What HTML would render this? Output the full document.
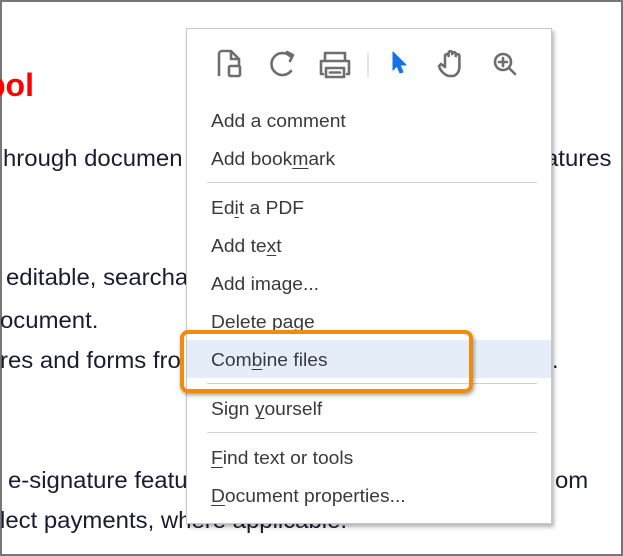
<!DOCTYPE html>
<html><head><meta charset="utf-8"><style>
body{margin:0;width:623px;height:556px;overflow:hidden;background:#fff;position:relative;font-family:"Liberation Sans",sans-serif}
.frame{position:absolute;left:0;top:0;width:619px;height:552px;border:2px solid #777}
.bg{position:absolute;font-size:23px;color:#1b1b33;white-space:nowrap;transform-origin:0 0;transform:scaleX(1.04);line-height:1}
.menu{position:absolute;left:186px;top:28px;width:364px;height:494px;background:#fff;border:1px solid #c8c8c8;box-shadow:2px 3px 4px rgba(0,0,0,.3)}
.it{position:absolute;left:24px;font-size:18.5px;color:#3a3a3a;line-height:1;transform-origin:0 0;transform:scaleX(1.04);white-space:nowrap}
.sep{position:absolute;left:20px;width:330px;height:1px;background:#d0d0d0}
.hl{position:absolute;left:0;top:311px;width:364px;height:38px;background:#e5eef8}
.orange{position:absolute;left:180px;top:330px;width:285px;height:55px;border:4px solid #f28b0c;border-radius:8px;box-shadow:1px 2px 4px rgba(0,0,0,.4)}
u{text-decoration-thickness:1px;text-underline-offset:3px}
</style></head><body>
<div class="frame"></div>
<div class="bg" style="left:-14px;top:69px;color:#f00;font-weight:bold;font-size:32px;transform:none">bol</div>
<div class="bg" style="left:3px;top:147px">hrough documen</div>
<div class="bg" style="left:545px;top:147px">atures</div>
<div class="bg" style="left:6px;top:266px">editable, searcha</div>
<div class="bg" style="left:0;top:309px">ocument.</div>
<div class="bg" style="left:0;top:349px">res and forms fro</div>
<div class="bg" style="left:552px;top:349px">.</div>
<div class="bg" style="left:8px;top:469px">e-signature featu</div>
<div class="bg" style="left:555px;top:469px">om</div>
<div class="bg" style="left:0;top:509px">lect payments, where applicable.</div>
<div class="menu">
<svg style="position:absolute;left:0;top:0" width="364" height="70" fill="none" stroke="#6e6e6e" stroke-width="2.6" stroke-linejoin="round" stroke-linecap="round">
<path d="M32 46V25a3 3 0 0 1 3-3h9l8 8v6M44 22v8h8"/><rect x="42" y="37" width="11" height="10" rx="1.5"/>
<path d="M103 27a11 11 0 1 0 1 15M100 23l6 3-3 6"/>
<path d="M138 32v-8h20v8M136 45h-2v-13h28v13h-2M139 39h18v9h-18zM143 43.5h10"/>
<line x1="181" y1="24" x2="181" y2="48" stroke="#ccc" stroke-width="1"/>
<path d="M206 23l13 13h-6l3 7-3 1-3-7-4 4z" fill="#1473e6" stroke="#1473e6" stroke-width="1"/>
<path d="M262 47c-5-1-9-6-10-10l2-2 4 3V27a1.8 1.8 0 0 1 3.6 0v-3a1.8 1.8 0 0 1 3.6 0v1a1.8 1.8 0 0 1 3.6 0v2a1.8 1.8 0 0 1 3.6 0v11c0 5-3 8-6 9z"/>
<circle cx="316" cy="33" r="8"/><path d="M322 39l6 6M316 29v8M312 33h8"/>
</svg>
<div class="it" style="top:83px">Add a comment</div>
<div class="it" style="top:121px">Add book<u>m</u>ark</div>
<div class="sep" style="top:153px"></div>
<div class="it" style="top:170px">Ed<u>i</u>t a PDF</div>
<div class="it" style="top:208px">Add te<u>x</u>t</div>
<div class="it" style="top:246px">Add image...</div>
<div class="it" style="top:284px">Delete page</div>
<div class="hl"></div>
<div class="it" style="top:322px">Com<u>b</u>ine files</div>
<div class="sep" style="top:354px"></div>
<div class="it" style="top:371px">Sign <u>y</u>ourself</div>
<div class="sep" style="top:403px"></div>
<div class="it" style="top:420px"><u>F</u>ind text or tools</div>
<div class="it" style="top:458px"><u>D</u>ocument properties...</div>
</div>
<div class="orange"></div>
</body></html>
